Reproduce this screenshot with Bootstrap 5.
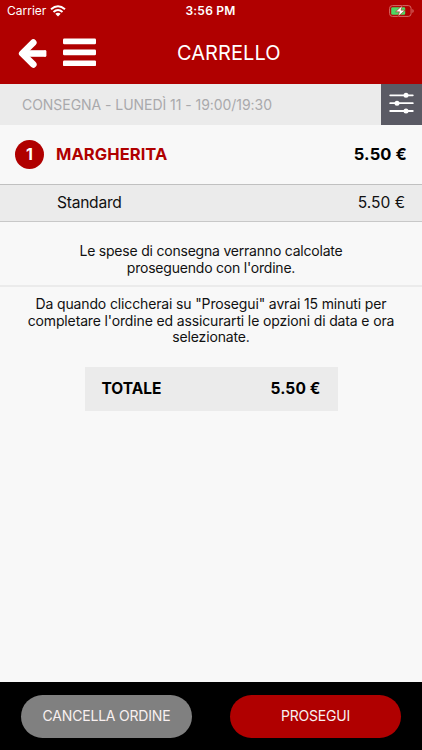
<!DOCTYPE html>
<html lang="it">
<head>
<meta charset="utf-8">
<meta name="viewport" content="width=device-width, initial-scale=1">
<title>Carrello</title>
<link href="https://cdn.jsdelivr.net/npm/bootstrap@5.3.0/dist/css/bootstrap.min.css" rel="stylesheet">
<style>
body{font-family:Inter,"Liberation Sans",sans-serif;background:#f8f8f8;color:#111;height:750px;overflow:hidden}
.brand-bg{background:#b00000}
.brand-text{color:#b00000}
.screen{height:750px}
.status{height:22px;font-size:12px;line-height:22px;padding:0 8px 0 7px}
.status .time{font-weight:600;letter-spacing:.25px}
.side{flex:1 1 0}
.title-bar{height:62px;padding-left:17px}
.title-bar h1{font-size:20px;line-height:24px;padding-left:80px;letter-spacing:.05px}
.slot{height:41px;background:#ebebeb;color:#a9a9ac;font-size:14px;letter-spacing:-.05px;padding-left:22px}
.tune{width:41px;background:#5a5a64}
.item{height:59px;padding:0 15px;font-size:16.5px}
.item .name{margin-left:12px;letter-spacing:.08px}
.item .cost{letter-spacing:.12px}
.qty{width:29px;height:29px;font-size:16px;padding-bottom:2px}
.variant{height:38px;background:#ebebeb;border-top:1px solid #c0c0c0;border-bottom:1px solid #c8c8c8;padding:0 17px 0 57px;font-size:15.6px;letter-spacing:-.26px}
.variant .cost{letter-spacing:-.05px}
.note{font-size:14px;line-height:16.7px;letter-spacing:-.21px;padding-top:21px;height:63px}
.note.second{padding-top:9px;height:80px;letter-spacing:-.14px}
.rule{height:2px;background:#ebebeb}
.total{width:253px;height:44px;background:#ebebeb;padding:0 17px;font-size:15.5px}
.total .cost{letter-spacing:.12px}
.actions{height:68px;background:#000;padding:0 21px}
.action{width:171px;height:43px;font-size:14px;letter-spacing:-.2px;color:#f8f0f0;border:0;padding:0 0 2px}
.cancel{background:#808080}
</style>
<script src="https://cdn.jsdelivr.net/npm/bootstrap@5.3.0/dist/js/bootstrap.bundle.min.js"></script>
</head>
<body>
<div class="screen d-flex flex-column">
<header class="brand-bg text-white">
  <div class="status d-flex align-items-center">
    <div class="side d-flex align-items-center gap-1"><span>Carrier</span>
      <svg width="16" height="12" viewBox="0 0 16 12" fill="none" stroke="#fff" stroke-width="2"><path d="M1 4.3Q8-1.7 15 4.3M3.5 7Q8 3 12.5 7"/><path d="M8 11.4L5.3 8.7Q8 6.7 10.7 8.7Z" fill="#fff" stroke="none"/></svg></div>
    <span class="time">3:56 PM</span>
    <div class="side d-flex justify-content-end">
      <svg width="25" height="12" viewBox="0 0 25 12"><rect x=".6" y=".6" width="21.5" height="10.8" rx="2.8" fill="none" stroke="#d46a66"/><rect x="2.2" y="2.2" width="14" height="7.6" rx="1.3" fill="#4cd964"/><path d="M23.4 4v4q1.3-.7 1.3-2T23.4 4" fill="#d46a66"/><path d="M13.4 .4L6.6 6.8H10.5L9 11.6L16 5.2H12Z" fill="#fff" stroke="#b00000" stroke-width=".5"/></svg></div>
  </div>
  <div class="title-bar d-flex align-items-center">
    <svg width="30" height="32" viewBox="0 0 30 32" fill="none" stroke="#fff" stroke-width="6.6" stroke-linejoin="round"><path d="M16.3 5.6L5.2 16.5L16.3 27.4" stroke-linecap="round"/><path d="M6 16.5H28.6" stroke-width="6.6"/><path d="M28.2 14.4V18.6" stroke-width="2.4" stroke-linecap="round"/></svg>
    <svg class="ms-3" width="34" height="30" viewBox="0 0 34 30" fill="#fff"><rect y=".6" width="33" height="5.7" rx="1.2"/><rect y="11.5" width="33" height="5.7" rx="1.2"/><rect y="22.4" width="33" height="5.7" rx="1.2"/></svg>
    <h1 class="fw-normal mb-0">CARRELLO</h1>
  </div>
</header>
<div class="slot d-flex align-items-center justify-content-between">
  <span>CONSEGNA - LUNEDÌ 11 - 19:00/19:30</span>
  <div class="tune h-100 d-flex align-items-start justify-content-center pt-2">
    <svg width="25" height="22" viewBox="0 0 25 22" fill="#fff" stroke="#fff" stroke-width="1.8" stroke-linecap="round"><path d="M1.2 3.3H23.8M1.2 11.2H23.8M1.2 19H23.8"/><g stroke="none"><circle cx="17" cy="3.3" r="2.5"/><circle cx="8" cy="11.2" r="2.5"/><circle cx="17" cy="19" r="2.5"/></g></svg>
  </div>
</div>
<div class="item d-flex align-items-center fw-bold">
  <span class="qty brand-bg text-white rounded-circle d-flex align-items-center justify-content-center">1</span>
  <span class="name brand-text">MARGHERITA</span>
  <span class="cost ms-auto text-black">5.50 €</span>
</div>
<div class="variant d-flex align-items-center justify-content-between"><span>Standard</span><span class="cost">5.50 €</span></div>
<p class="note text-center mb-0">Le spese di consegna verranno calcolate<br>proseguendo con l'ordine.</p>
<div class="rule"></div>
<p class="note second text-center mb-0">Da quando cliccherai su "Prosegui" avrai 15 minuti per<br>completare l'ordine ed assicurarti le opzioni di data e ora<br>selezionate.</p>
<div class="total mx-auto d-flex align-items-center justify-content-between fw-bold text-black"><span>TOTALE</span><span class="cost">5.50 €</span></div>
<footer class="actions mt-auto d-flex align-items-center justify-content-between">
  <button class="action cancel btn rounded-pill">CANCELLA ORDINE</button>
  <button class="action brand-bg btn rounded-pill">PROSEGUI</button>
</footer>
</div>
</body>
</html>
